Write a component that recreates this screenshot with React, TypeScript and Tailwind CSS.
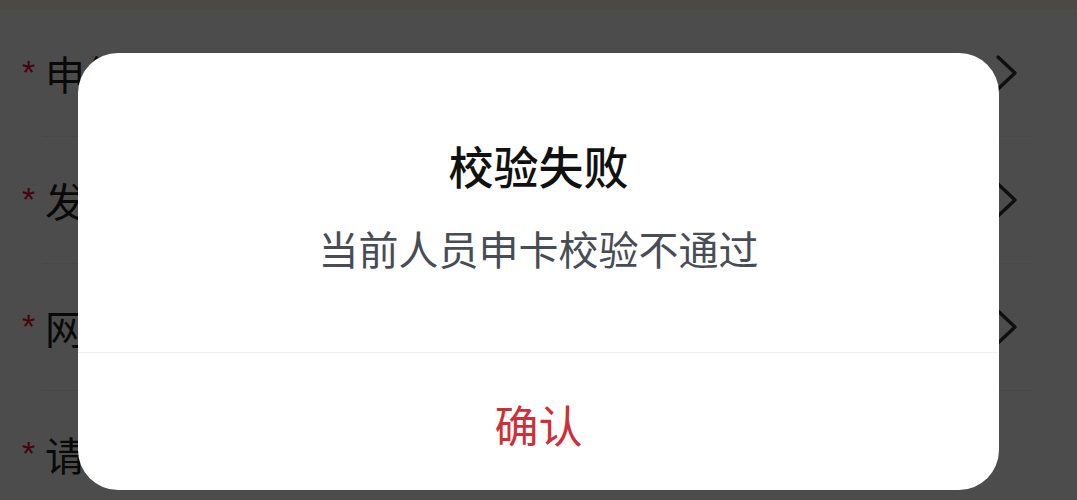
import React from "react";

const rows = [
  { label: "申领方式", arrow: true },
  { label: "发卡网点", arrow: true },
  { label: "网点地址", arrow: true },
  { label: "请选择", arrow: false },
];

const Chevron = () => (
  <svg width="24" height="38" viewBox="0 0 24 38" fill="none" className="shrink-0">
    <path d="M3 3 L20 19 L3 35" stroke="#323233" strokeWidth="3.4" strokeLinecap="round" strokeLinejoin="round" />
  </svg>
);

export default function App() {
  return (
    <div
      className="relative w-[1077px] h-[500px] overflow-hidden bg-white"
      style={{ fontFamily: '"Noto Sans CJK SC", "Noto Sans", sans-serif' }}
    >
      {/* page under the dialog */}
      <div className="h-[10px] bg-[#fbf5ea]" />
      {rows.map((r) => (
        <div key={r.label}>
          <div className="h-[126px] flex items-center pl-[22px] pr-[58px]">
            <span
              className="text-[34px] leading-none text-[#ee0a24] self-start mt-[45px] w-[23px]"
              style={{ fontFamily: '"Liberation Sans", sans-serif' }}
            >
              *
            </span>
            <span className="text-[40px] leading-none text-[#1f1f22]">{r.label}</span>
            <div className="flex-1" />
            {r.arrow && <Chevron />}
          </div>
          <div className="h-px ml-[42px] mr-[45px] bg-[#ebedf0]" />
        </div>
      ))}

      {/* mask + dialog */}
      <div className="absolute inset-0 bg-black/70 flex justify-center pt-[53px]">
        <div className="w-[921px] h-[437px] bg-white rounded-[40px] flex flex-col overflow-hidden">
          <div className="flex flex-col items-center pt-[88px] pb-[79px]">
            <div className="text-[45px] leading-[50px] font-medium text-[#111111]">校验失败</div>
            <div className="mt-[32px] text-[40px] leading-[50px] text-[#474d57]">当前人员申卡校验不通过</div>
          </div>
          <div className="h-px bg-[#f0f0f2]" />
          <button className="flex-1 flex items-center justify-center pt-[4px] text-[44px] leading-none text-[#cf3038]">
            确认
          </button>
        </div>
      </div>
    </div>
  );
}
